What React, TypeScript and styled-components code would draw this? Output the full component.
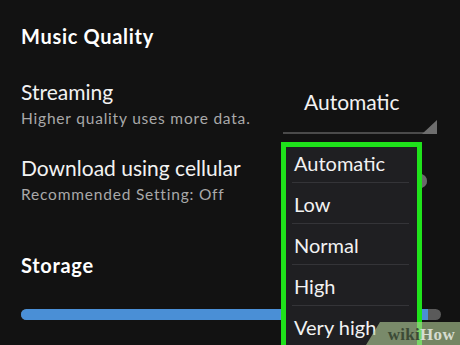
import { createGlobalStyle, styled } from "styled-components";

const GlobalStyle = createGlobalStyle`
  html, body {
    margin: 0;
    padding: 0;
    background: #121212;
  }
  * {
    box-sizing: border-box;
  }
`;

const qualities = ["Automatic", "Low", "Normal", "High", "Very high"];

export default function App() {
  return (
    <>
      <GlobalStyle />
      <StyledScreen>
        <StyledSectionTitle>Music Quality</StyledSectionTitle>

        <StyledSettingRow $top={32}>
          <StyledSettingText>
            <StyledLabel>Streaming</StyledLabel>
            <StyledHint>Higher quality uses more data.</StyledHint>
          </StyledSettingText>
          <StyledSelect>
            <StyledSelectValue>Automatic</StyledSelectValue>
            <StyledSelectCorner viewBox="0 0 15 14" aria-hidden>
              <polygon points="0,14 15,0 15,14" fill="#6e6e6e" />
            </StyledSelectCorner>
          </StyledSelect>
        </StyledSettingRow>

        <StyledSettingRow $top={22}>
          <StyledSettingText>
            <StyledLabel>Download using cellular</StyledLabel>
            <StyledHint>Recommended Setting: Off</StyledHint>
          </StyledSettingText>
          <StyledToggle>
            <StyledToggleKnob />
          </StyledToggle>
        </StyledSettingRow>

        <StyledSectionTitle $top={50}>Storage</StyledSectionTitle>

        <StyledStorageBar>
          <StyledStorageUsed style={{ width: "97%" }} />
        </StyledStorageBar>

        <StyledDropdown>
          {qualities.map((q, i) => (
            <StyledOption key={q} $first={i === 0}>
              {q}
            </StyledOption>
          ))}
        </StyledDropdown>

        <StyledWatermark>
          <span>wiki</span>
          <b>How</b>
        </StyledWatermark>
      </StyledScreen>
    </>
  );
}

const StyledScreen = styled.div`
  position: relative;
  width: 460px;
  height: 345px;
  overflow: hidden;
  padding: 24px 19px 0 21px;
  background: #121212;
  font-family: Lato, "Liberation Sans", sans-serif;
  color: #f2f2f2;
`;

const StyledSectionTitle = styled.h2<{ $top?: number }>`
  margin: ${(props) => props.$top ?? 0}px 0 0;
  font-size: 20px;
  line-height: 24px;
  font-weight: 700;
  letter-spacing: 0.7px;
  color: #ffffff;
`;

const StyledSettingRow = styled.div<{ $top: number }>`
  display: flex;
  justify-content: space-between;
  align-items: flex-start;
  margin-top: ${(props) => props.$top}px;
`;

const StyledSettingText = styled.div`
  display: flex;
  flex-direction: column;
  row-gap: 5px;
`;

const StyledLabel = styled.div`
  font-size: 21px;
  line-height: 24px;
  color: #f2f2f2;
`;

const StyledHint = styled.div`
  font-size: 15.5px;
  line-height: 18px;
  letter-spacing: 0.8px;
  color: #a9a9a9;
`;

const StyledSelect = styled.div`
  position: relative;
  width: 154px;
  margin: 10px 4px 0 0;
  padding: 0 0 18px 21px;
  border-bottom: 2px solid #4a4a4a;
`;

const StyledSelectValue = styled.div`
  font-size: 21px;
  line-height: 24px;
  color: #f2f2f2;
`;

const StyledSelectCorner = styled.svg`
  position: absolute;
  right: 0;
  bottom: -2px;
  width: 15px;
  height: 14px;
`;

const StyledToggle = styled.div`
  display: flex;
  justify-content: flex-end;
  align-items: center;
  width: 40px;
  height: 14px;
  margin: 18px 14px 0 0;
  border-radius: 7px;
  background: #4f4f4f;
`;

const StyledToggleKnob = styled.div`
  width: 14px;
  height: 14px;
  border-radius: 50%;
  background: #6a6a6a;
`;

const StyledStorageBar = styled.div`
  height: 11px;
  margin-top: 32px;
  border-radius: 6px;
  background: #5a5a5a;
  overflow: hidden;
`;

const StyledStorageUsed = styled.div`
  height: 100%;
  background: #4a8fd6;
`;

const StyledDropdown = styled.ul`
  position: absolute;
  top: 142px;
  left: 281px;
  width: 141px;
  height: 215px;
  margin: 0;
  padding: 0;
  list-style: none;
  background: #1f1f22;
  border: 5px solid #1fe21b;
`;

const StyledOption = styled.li<{ $first?: boolean }>`
  position: relative;
  height: ${(props) => (props.$first ? 36 : 41)}px;
  padding: ${(props) => (props.$first ? 4 : 9)}px 0 0 8px;
  font-size: 20px;
  line-height: 24px;
  color: #f2f2f2;

  &::after {
    content: "";
    position: absolute;
    left: 6px;
    right: 8px;
    bottom: 0;
    height: 1px;
    background: #343438;
  }
`;

const StyledWatermark = styled.div`
  position: absolute;
  right: 0;
  bottom: 0;
  width: 94px;
  height: 23px;
  padding: 2px 5px 0 0;
  display: flex;
  justify-content: flex-end;
  align-items: center;
  background: rgba(178, 205, 150, 0.62);
  clip-path: polygon(14px 0, 100% 0, 100% 100%, 0 100%);
  font-family: "Liberation Serif", "DejaVu Serif", serif;
  font-size: 17px;
  font-weight: 700;
  letter-spacing: 0.3px;

  span {
    color: #3c4a36;
  }
  b {
    color: #d6dccf;
  }
`;
